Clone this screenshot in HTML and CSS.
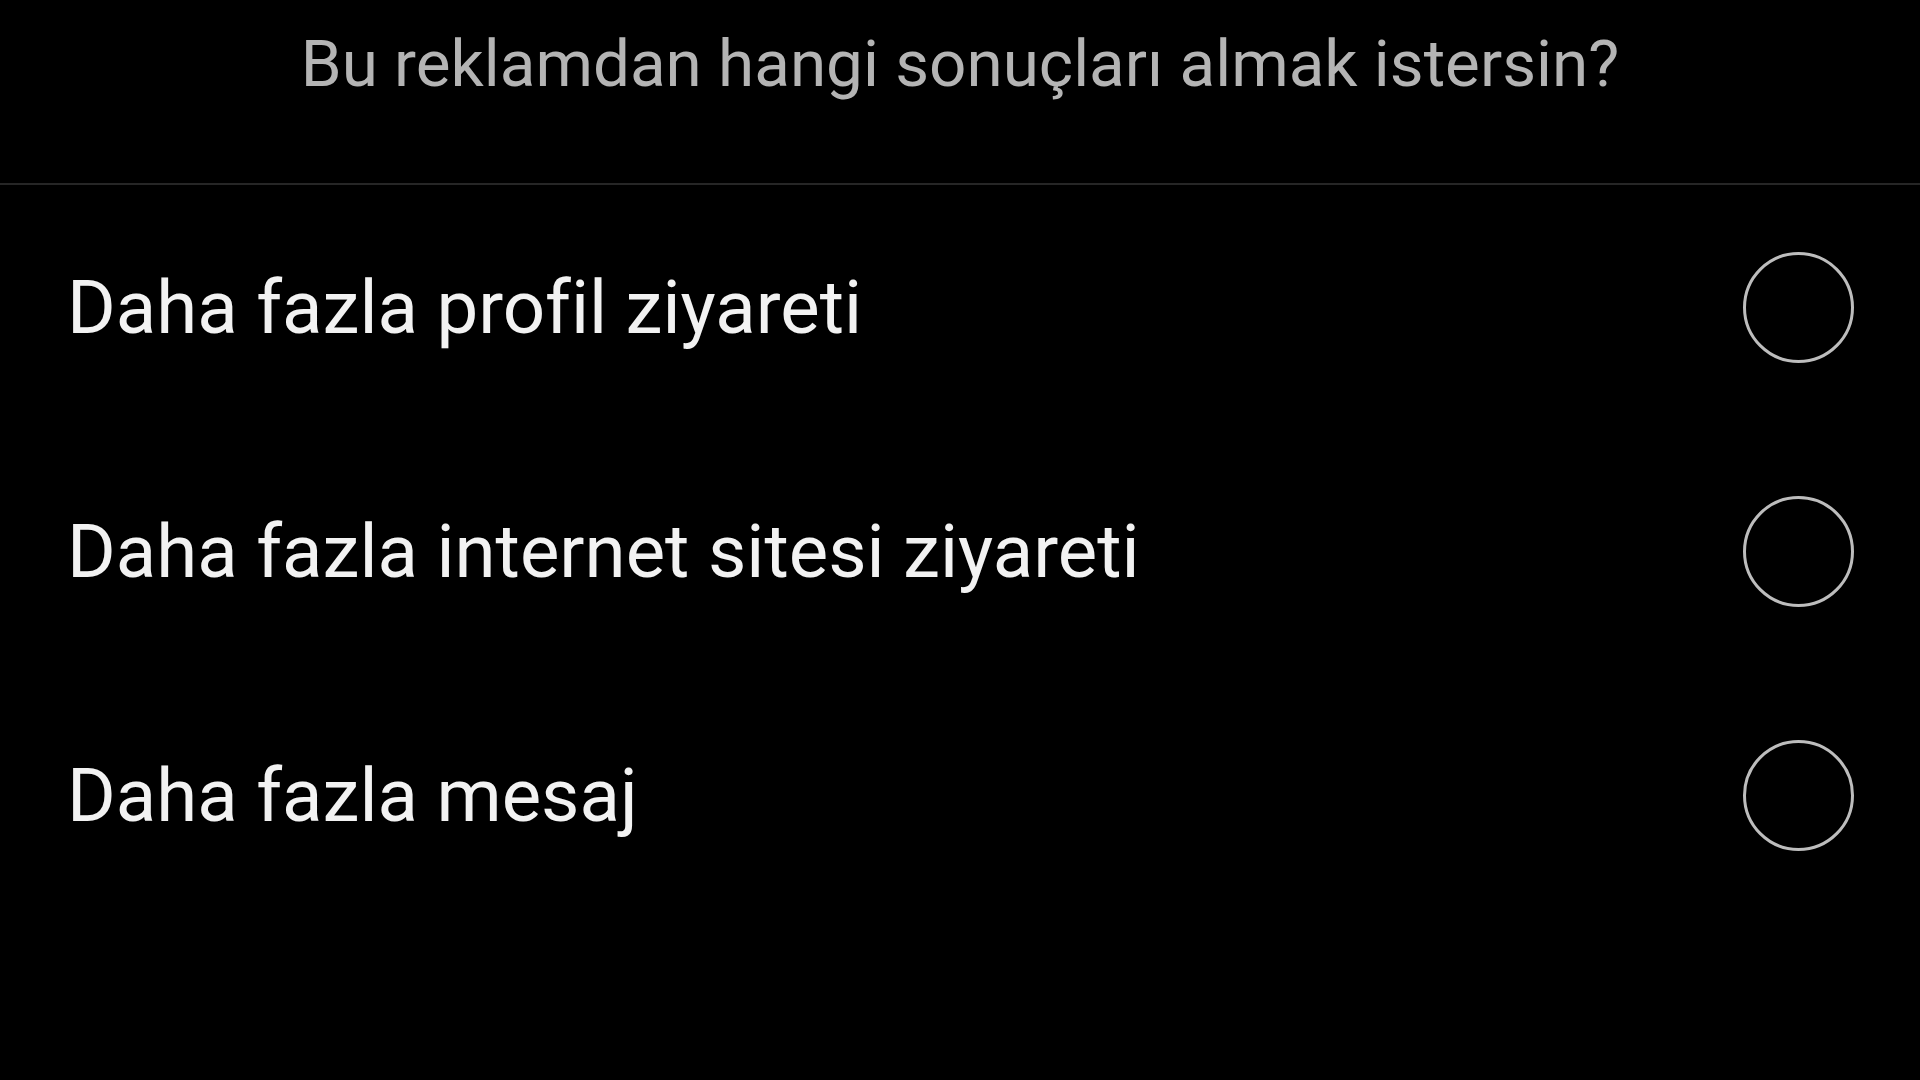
FILE: index.html
```html
<!DOCTYPE html>
<html lang="tr">
<head>
  <meta charset="UTF-8">
  <meta name="viewport" content="width=device-width, initial-scale=1.0">
  <title>Reklam hedefi</title>
  <link rel="stylesheet" href="styles.css">
</head>
<body>

<div class="header">
  <h1>Bu reklamdan hangi sonuçları almak istersin?</h1>
</div>

<div class="options">
  <label class="option">
    <span class="option-text">Daha fazla profil ziyareti</span>
    <span class="radio"></span>
  </label>
  <label class="option">
    <span class="option-text">Daha fazla internet sitesi ziyareti</span>
    <span class="radio"></span>
  </label>
  <label class="option">
    <span class="option-text">Daha fazla mesaj</span>
    <span class="radio"></span>
  </label>
</div>

</body>
</html>
```

FILE: styles.css
```css
body {
  margin: 0;
  padding: 0;
  background-color: #000;
  font-family: Roboto, "Liberation Sans", sans-serif;
  overflow: hidden;
}

.header {
  padding: 20px 0 75px;
  border-bottom: 2px solid #262626;
}

.header h1 {
  margin: 0;
  font-size: 65.6px;
  font-weight: normal;
  line-height: 88px;
  color: #b4b4b4;
  text-align: center;
}

.options {
  padding: 0 66px 0 67px;
}

.option {
  display: flex;
  align-items: center;
  justify-content: space-between;
  height: 244px;
}

.option-text {
  font-size: 74.4px;
  color: #f2f2f2;
}

.radio {
  width: 105px;
  height: 105px;
  border: 3.5px solid #bdbdbd;
  border-radius: 50%;
}
```
